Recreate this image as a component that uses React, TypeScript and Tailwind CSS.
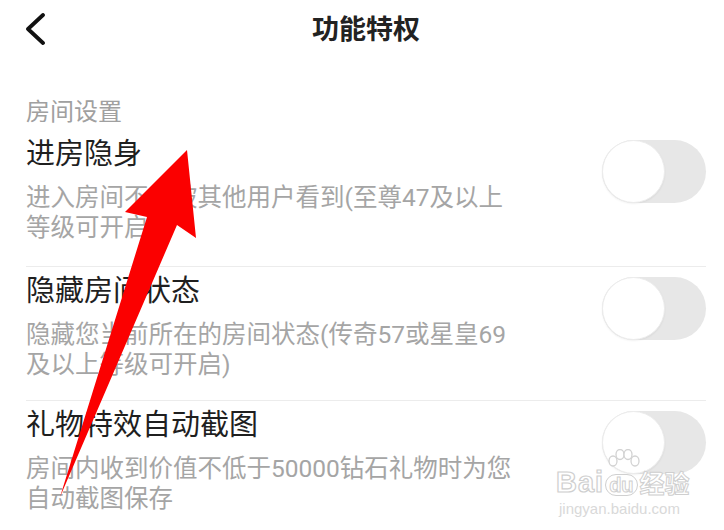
import React from "react";

const FONT = "font-['Roboto','Noto_Sans_CJK_SC',sans-serif]";

function Toggle() {
  return (
    <div className="relative w-[104px] h-[63px] rounded-full bg-[#e7e7e7] shrink-0">
      <div className="absolute left-0 top-0 w-[63px] h-[63px] rounded-full bg-white border border-[#ececec] shadow-[0_1px_2px_rgba(0,0,0,0.06)]" />
    </div>
  );
}

function Row({
  title,
  lines,
  divider,
  pt,
  pb,
}: {
  title: string;
  lines: string[];
  divider: boolean;
  pt: string;
  pb: string;
}) {
  return (
    <div className={`flex justify-between items-start ${pt} ${pb} ${divider ? "border-b border-[#ececec]" : ""}`}>
      <div className="flex flex-col">
        <div className="text-[29px] leading-[36px] text-[#1f1f1f]">{title}</div>
        <div className="mt-[11px] text-[24.5px] leading-[30px] text-[#a5a5a5]">
          {lines.map((l, i) => (
            <div key={i} className="whitespace-nowrap">{l}</div>
          ))}
        </div>
      </div>
      <div className="mt-[4px]">
        <Toggle />
      </div>
    </div>
  );
}

export default function App() {
  return (
    <div className={`relative w-[724px] h-[530px] bg-white overflow-hidden ${FONT}`}>
      {/* header */}
      <div className="grid grid-cols-[1fr_auto_1fr] items-center h-[60px]">
        <div className="pl-[25px] flex items-center">
          <svg width="22" height="34" viewBox="0 0 22 34">
            <polyline
              points="18,2 3,16 18,30"
              fill="none"
              stroke="#111"
              strokeWidth="3.8"
              strokeLinecap="round"
              strokeLinejoin="round"
            />
          </svg>
        </div>
        <div className="pl-[8px] text-[27px] font-bold text-[#222] leading-[36px]">功能特权</div>
        <div />
      </div>

      <div className="pl-[26px] pr-[18px]">
        <div className="mt-[36px] text-[24px] leading-[32px] text-[#a0a0a0]">房间设置</div>
        <Row
          title="进房隐身"
          lines={["进入房间不会被其他用户看到(至尊47及以上", "等级可开启)"]}
          divider
          pt="pt-[8px]"
          pb="pb-[23px]"
        />
        <Row
          title="隐藏房间状态"
          lines={["隐藏您当前所在的房间状态(传奇57或星皇69", "及以上等级可开启)"]}
          divider
          pt="pt-[6px]"
          pb="pb-[20px]"
        />
        <Row
          title="礼物特效自动截图"
          lines={["房间内收到价值不低于50000钻石礼物时为您", "自动截图保存"]}
          divider={false}
          pt="pt-[6px]"
          pb="pb-[22px]"
        />
      </div>

      {/* Baidu watermark */}
      <div className="absolute left-[556px] top-[446px] flex flex-col items-start pointer-events-none">
        <svg className="absolute left-[50px] top-[3px]" width="36" height="26" viewBox="0 0 36 26">
          <g fill="white" stroke="#d2d2d2" strokeWidth="1.3">
            <ellipse cx="7" cy="12" rx="4" ry="5" />
            <ellipse cx="14" cy="5.5" rx="4" ry="5" />
            <ellipse cx="22" cy="5.5" rx="4" ry="5" />
            <ellipse cx="29" cy="12" rx="4" ry="5" />
          </g>
        </svg>
        <div className="flex items-end mt-[22px] leading-none">
          <span className="text-[29px] font-bold tracking-[1px] text-white [-webkit-text-stroke:1.2px_#cfcfcf] font-['Liberation_Sans',sans-serif]">Bai</span>
          <span className="ml-[1px] mb-[1px] px-[3px] rounded-[11px] border-[1.5px] border-[#d0d0d0] text-[20px] font-bold text-white [-webkit-text-stroke:1px_#cfcfcf] font-['Liberation_Sans',sans-serif]">du</span>
          <span className="ml-[2px] text-[25px] font-bold text-white [-webkit-text-stroke:1px_#cfcfcf]">经验</span>
        </div>
        <div className="mt-[4px] ml-[3px] text-[15px] leading-[15px] text-[#d9d9d9] font-['Liberation_Sans',sans-serif]">
          jingyan.baidu.com
        </div>
      </div>

      {/* red annotation arrow */}
      <svg className="absolute inset-0 pointer-events-none" width="724" height="530" viewBox="0 0 724 530">
        <polygon
          points="187,150 196,238 177,225 60,497 147,217 125,212"
          fill="#fb0000"
        />
      </svg>
    </div>
  );
}
